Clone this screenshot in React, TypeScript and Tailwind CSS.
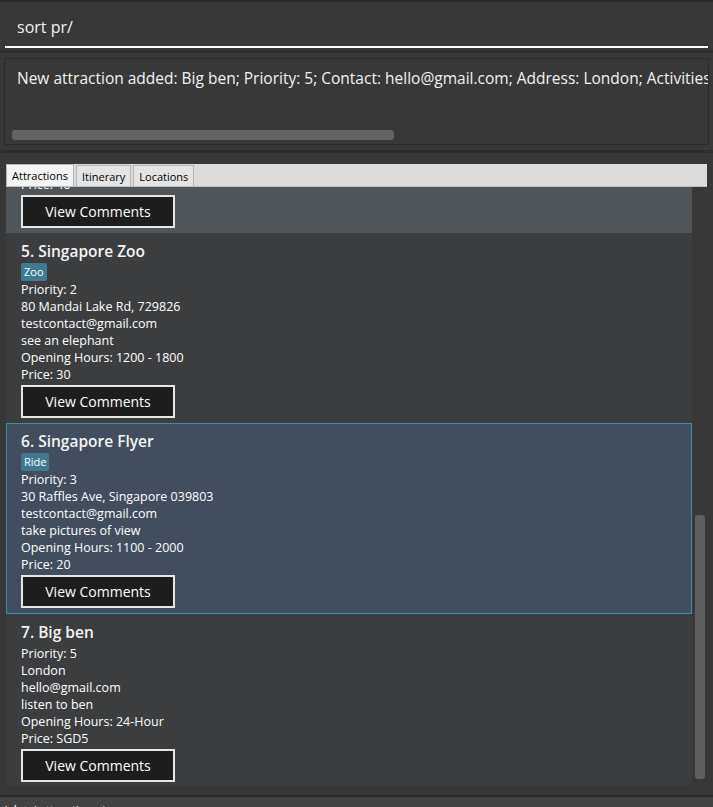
import React from "react";

type Attraction = {
  index: number;
  name: string;
  tag?: string;
  priority: string;
  address: string;
  contact: string;
  activity: string;
  hours: string;
  price: string;
  selected?: boolean;
};

const attractions: Attraction[] = [
  {
    index: 5,
    name: "Singapore Zoo",
    tag: "Zoo",
    priority: "2",
    address: "80 Mandai Lake Rd, 729826",
    contact: "testcontact@gmail.com",
    activity: "see an elephant",
    hours: "1200 - 1800",
    price: "30",
  },
  {
    index: 6,
    name: "Singapore Flyer",
    tag: "Ride",
    priority: "3",
    address: "30 Raffles Ave, Singapore 039803",
    contact: "testcontact@gmail.com",
    activity: "take pictures of view",
    hours: "1100 - 2000",
    price: "20",
    selected: true,
  },
  {
    index: 7,
    name: "Big ben",
    priority: "5",
    address: "London",
    contact: "hello@gmail.com",
    activity: "listen to ben",
    hours: "24-Hour",
    price: "SGD5",
  },
];

const font = { fontFamily: '"Segoe UI", "Open Sans", "Noto Sans", sans-serif' };

function CommentsButton() {
  return (
    <button className="mt-[2px] h-[33px] w-[154px] shrink-0 border-2 border-[#e6e6e6] bg-[#1d1d1d] text-[14px] text-white">
      View Comments
    </button>
  );
}

function Card({ a }: { a: Attraction }) {
  return (
    <div
      className={
        a.selected
          ? "flex shrink-0 flex-col items-start border border-[#3b8ea6] bg-[#424d5e] pt-[7px] pb-[5px] pl-[14px]"
          : "flex shrink-0 flex-col items-start bg-[#3c3d3f] pt-[8px] pb-[5px] pl-[15px]"
      }
    >
      <div className="h-[20px] text-[15.5px] leading-[20px] font-semibold text-[#f4f4f4]">
        {a.index}. {a.name}
      </div>
      {a.tag && (
        <div className="mt-[2px] h-[18px] rounded-[2px] bg-[#3e7b91] px-[3px] text-[11px] leading-[18px] text-white">
          {a.tag}
        </div>
      )}
      <div className={a.tag ? "text-[12.5px] leading-[17px] text-white" : "mt-[3px] text-[12.5px] leading-[17px] text-white"}>
        <div>Priority: {a.priority}</div>
        <div>{a.address}</div>
        <div>{a.contact}</div>
        <div>{a.activity}</div>
        <div>Opening Hours: {a.hours}</div>
        <div>Price: {a.price}</div>
      </div>
      <CommentsButton />
    </div>
  );
}

export default function App() {
  return (
    <div className="flex h-[807px] w-[713px] flex-col overflow-hidden bg-[#383838]" style={font}>
      <div className="h-[2px] shrink-0 bg-[#2b2b2b]" />

      {/* command box */}
      <div className="flex h-[48px] shrink-0 flex-col px-[5px]">
        <div className="flex h-[44px] items-center pt-[6px] pl-[12px] text-[16px] text-[#f2f2f2]">sort pr/</div>
        <div className="h-[2px] bg-white" />
      </div>
      <div className="h-[3px] shrink-0 bg-[#2e2e2e]" />

      {/* result display */}
      <div className="h-[97px] shrink-0 px-[4px] py-[5px]">
        <div className="flex h-full flex-col overflow-hidden border border-[#2b2b2b] bg-[#383838] pl-[7px]">
          <div className="mt-[9px] whitespace-nowrap pl-[5px] text-[15.5px] leading-[20px] text-[#f2f2f2]">
            New attraction added: Big ben; Priority: 5; Contact: hello@gmail.com; Address: London; Activities: listen to ben
          </div>
          <div className="mt-auto mb-[4px] h-[10px] w-[382px] rounded-[3px] bg-[#636363]" />
        </div>
      </div>
      <div className="h-[3px] shrink-0 bg-[#2e2e2e]" />

      {/* tabs + list */}
      <div className="flex h-[642px] shrink-0 flex-col pt-[11px] pl-[6px] pr-[6px]">
        <div className="relative z-10 flex h-[23px] shrink-0 items-end border-b border-[#bdbdbd] bg-[#dcdcdc]">
          <div className="flex h-[22px] items-center border border-b-0 border-[#b5b5b5] bg-[#f4f4f4] px-[5px] pt-[2px] text-[11px] text-black">
            Attractions
          </div>
          <div className="ml-[2px] flex h-[21px] items-center border border-b-0 border-[#b5b5b5] bg-[#e4e4e4] px-[5px] pt-[2px] text-[11px] text-black">
            Itinerary
          </div>
          <div className="ml-[2px] flex h-[21px] items-center border border-b-0 border-[#b5b5b5] bg-[#e4e4e4] px-[5px] pt-[2px] text-[11px] text-black">
            Locations
          </div>
        </div>

        <div className="flex h-[598px] shrink-0">
          <div className="flex w-[686px] flex-col overflow-hidden">
            {/* partially scrolled card */}
            <div className="flex h-[46px] shrink-0 flex-col items-start justify-end overflow-hidden bg-[#505559] pb-[5px] pl-[15px]">
              <div className="shrink-0 text-[12.5px] leading-[17px] text-white">Price: 40</div>
              <CommentsButton />
            </div>
            {attractions.map((a) => (
              <Card key={a.index} a={a} />
            ))}
          </div>
          <div className="flex flex-1 flex-col items-center pt-[328px]">
            <div className="h-[264px] w-[10px] rounded-[3px] bg-[#5f5f5f]" />
          </div>
        </div>
      </div>

      {/* status bar */}
      <div className="h-[2px] shrink-0 bg-[#2b2b2b]" />
      <div className="flex-1 overflow-hidden bg-[#424242] pt-[7px] pl-[2px] text-[12px] leading-[14px] text-white">
        .\data\attractions.json
      </div>
    </div>
  );
}
